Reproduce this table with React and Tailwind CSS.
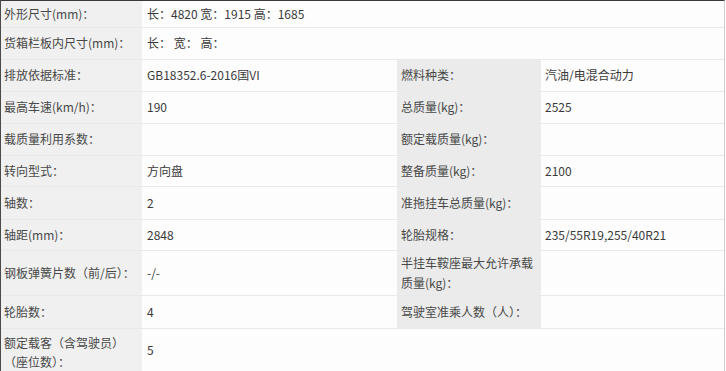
import React from "react";

const L = "bg-[#f0f0f0] pl-[3px] pr-1 flex items-center whitespace-nowrap text-[#484848]";
const V = "bg-[#fdfdfd] pl-[5px] flex items-center whitespace-nowrap text-[#3a3a3a]";
const L2 = "bg-[#ebebeb] pl-[4px] pr-1 flex items-center whitespace-nowrap text-[#484848]";
const V2 = "bg-[#fdfdfd] pl-[4px] flex items-center whitespace-nowrap text-[#3a3a3a]";

function Row({ h, children }) {
  return (
    <div
      className={`grid grid-cols-[141px_255px_144px_1fr] border-b border-[#e9e9e9] ${h}`}
    >
      {children}
    </div>
  );
}

export default function App() {
  return (
    <div
      className="w-[726px] h-[371px] overflow-hidden bg-white text-[12px] leading-[20px]"
      style={{ fontFamily: '"Noto Sans CJK SC", "Noto Sans", sans-serif' }}
    >
      <div className="w-[725px] h-full border-t border-l border-t-[#3a3a3a] border-l-[#4a4a4a] border-r border-r-[#cfcfcf] flex flex-col">
        <Row h="h-[27px]">
          <div className={L}>外形尺寸(mm)：</div>
          <div className={`${V} col-span-3`}>长：4820 宽：1915 高：1685</div>
        </Row>
        <Row h="h-[32px]">
          <div className={L}>货箱栏板内尺寸(mm)：</div>
          <div className={`${V} col-span-3`}>长： 宽： 高：</div>
        </Row>
        <Row h="h-[32px]">
          <div className={L}>排放依据标准：</div>
          <div className={V}>GB18352.6-2016国VI</div>
          <div className={L2}>燃料种类：</div>
          <div className={V2}>汽油/电混合动力</div>
        </Row>
        <Row h="h-[32px]">
          <div className={L}>最高车速(km/h)：</div>
          <div className={V}>190</div>
          <div className={L2}>总质量(kg)：</div>
          <div className={V2}>2525</div>
        </Row>
        <Row h="h-[32px]">
          <div className={L}>载质量利用系数：</div>
          <div className={V}></div>
          <div className={L2}>额定载质量(kg)：</div>
          <div className={V2}></div>
        </Row>
        <Row h="h-[32px]">
          <div className={L}>转向型式：</div>
          <div className={V}>方向盘</div>
          <div className={L2}>整备质量(kg)：</div>
          <div className={V2}>2100</div>
        </Row>
        <Row h="h-[33px]">
          <div className={L}>轴数：</div>
          <div className={V}>2</div>
          <div className={L2}>准拖挂车总质量(kg)：</div>
          <div className={V2}></div>
        </Row>
        <Row h="h-[31px]">
          <div className={L}>轴距(mm)：</div>
          <div className={V}>2848</div>
          <div className={L2}>轮胎规格：</div>
          <div className={V2}>235/55R19,255/40R21</div>
        </Row>
        <Row h="h-[45px]">
          <div className={L}>钢板弹簧片数（前/后）：</div>
          <div className={V}>-/-</div>
          <div className={L2}>
            半挂车鞍座最大允许承载
            <br />
            质量(kg)：
          </div>
          <div className={V2}></div>
        </Row>
        <Row h="h-[33px]">
          <div className={L}>轮胎数：</div>
          <div className={V}>4</div>
          <div className={L2}>驾驶室准乘人数（人）：</div>
          <div className={V2}></div>
        </Row>
        <div className="grid grid-cols-[141px_255px_144px_1fr] flex-1">
          <div className={`${L} items-start pt-[4px] leading-[19px]`}>
            额定载客（含驾驶员）
            <br />
            （座位数）：
          </div>
          <div className={V}>5</div>
          <div className="bg-[#fdfdfd] col-span-2"></div>
        </div>
      </div>
    </div>
  );
}
